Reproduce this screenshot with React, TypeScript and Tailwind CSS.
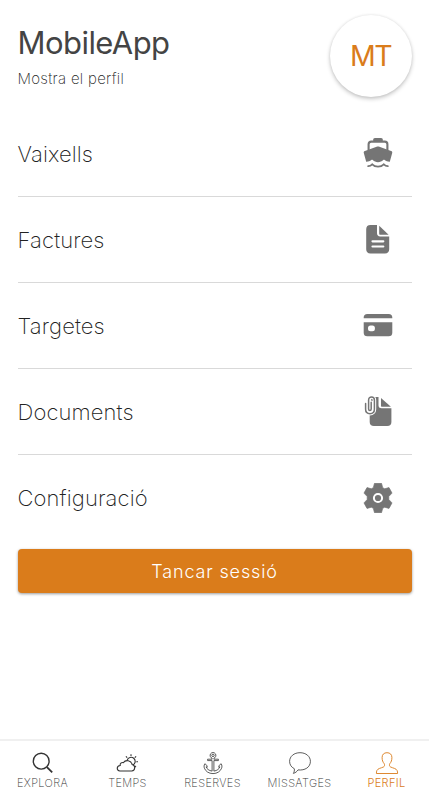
import React from 'react';
import clsx from 'clsx';

type IconProps = { className?: string };

const BoatIcon = ({ className }: IconProps) => (
  <svg viewBox="0 0 30 30" className={className} fill="currentColor">
    <path d="M10.200 3.500V1.800C10.200.7 10.800 0 12 0h6c1.200 0 1.800.7 1.800 1.800v1.700z" />
    <path d="M5.600 12V6.200c0-1.600 1-2.600 2.600-2.600h13.600c1.600 0 2.600 1 2.600 2.600V12" fill="none" stroke="currentColor" strokeWidth="2.100" />
    <path d="M13.600 8.700c1-.4 1.800-.4 2.800 0l11.700 4.300c1 .4 1.400 1.100 1.100 2.100l-2.400 8.700c-1.900.1-3.700-.4-5.100-1.700-.5-.4-1-.4-1.500 0-1.400 1.400-3.100 2.100-5.200 2.100s-3.800-.7-5.200-2.100c-.5-.4-1-.4-1.500 0-1.400 1.300-3.200 1.800-5.100 1.700L.8 15.100c-.3-1 .1-1.700 1.100-2.100z" />
    <path d="M5.200 28.200c1.600-.1 2.900-.8 4-1.900 1.500 1.500 3.500 2.300 5.800 2.300s4.300-.8 5.800-2.300c1.100 1.100 2.400 1.800 4 1.900" fill="none" stroke="currentColor" strokeWidth="1.800" strokeLinecap="round" />
  </svg>
);

const InvoiceIcon = ({ className }: IconProps) => (
  <svg viewBox="0 0 30 30" className={className}>
    <path d="M7.400 1H14v8.300c0 2 1.200 3.200 3.200 3.200h9v12.700c0 2.700-1.500 4.200-4.200 4.200H7.400c-2.700 0-4.200-1.500-4.200-4.200v-20C3.200 2.500 4.700 1 7.400 1z" fill="currentColor" />
    <path d="M16.200 1.700l9.400 9.100h-8.300c-.8 0-1.100-.3-1.100-1.100z" fill="currentColor" />
    <path d="M9.500 17.300h10.800M9.500 22.500h10.800" stroke="white" strokeWidth="2.200" strokeLinecap="round" />
  </svg>
);

const CardIcon = ({ className }: IconProps) => (
  <svg viewBox="0 0 30 30" className={className} fill="currentColor">
    <path d="M.7 8.300V7.600C.7 5.300 2 4 4.300 4h21.400c2.300 0 3.600 1.300 3.600 3.600v.7z" />
    <path d="M.7 12.200h28.600v10.500c0 2.300-1.300 3.600-3.600 3.600H4.300C2 26.300.7 25 .7 22.700zM7.500 15.500a2.500 2.500 0 0 0-2.500 2.500v.8a2.500 2.500 0 0 0 2.500 2.500h1.900a2.500 2.500 0 0 0 2.500-2.500V18a2.500 2.500 0 0 0-2.500-2.500z" fillRule="evenodd" />
  </svg>
);

const DocumentIcon = ({ className }: IconProps) => (
  <svg viewBox="0 0 30 30" className={className}>
    <path d="M9 1h6.500v8.200c0 2 1 3 3 3h9.900v13.700c0 2.700-1.400 4.100-4.100 4.100H10.900c-2.700 0-4.200-1.500-4.200-4.100V8z" fill="currentColor" />
    <path d="M18 2l9.900 8.700H19c-.7 0-1-.3-1-1z" fill="currentColor" />
    <path d="M2.600 7.500v5.800c0 2.900 1.900 4.400 4.400 4.400s4.400-1.600 4.400-4.400V4c0-1.900-1.200-3-2.900-3S5.600 2.100 5.600 4v9c0 1.900 2.600 1.900 2.600 0V6.300" fill="none" stroke="white" strokeWidth="3.600" strokeLinecap="round" />
    <path d="M2.600 7.500v5.800c0 2.900 1.900 4.400 4.400 4.400s4.400-1.600 4.400-4.400V4c0-1.900-1.200-3-2.900-3S5.600 2.100 5.600 4v9c0 1.900 2.600 1.900 2.600 0V6.300" fill="none" stroke="currentColor" strokeWidth="1.500" strokeLinecap="round" />
  </svg>
);

const GearIcon = ({ className }: IconProps) => (
  <svg viewBox="0 0 30 30" className={className}>
    <path
      d="M11.500.3h7l1.200 4.400 2 1.100 4.300-1.200 3 5.500-3.200 3.400v3l3.200 3.400-3 5.500-4.300-1.200-2 1.100-1.200 4.400h-7l-1.200-4.400-2-1.100L4 25.400l-3-5.500 3.200-3.400v-3L1 10.100l3-5.500 4.300 1.200 2-1.100z"
      fill="currentColor"
      stroke="currentColor"
      strokeWidth=".7"
      strokeLinejoin="round"
    />
    <circle cx="15" cy="15" r="4.100" fill="none" stroke="white" strokeWidth="2" />
  </svg>
);

const SearchIcon = ({ className }: IconProps) => (
  <svg viewBox="0 0 24 24" className={className} fill="none" stroke="currentColor">
    <circle cx="10.200" cy="10.200" r="7.900" strokeWidth="1.400" />
    <path d="M15.900 16.100l5.300 5.300" strokeWidth="1.800" />
  </svg>
);

const WeatherIcon = ({ className }: IconProps) => (
  <svg viewBox="0 0 24 24" className={className} fill="none" stroke="currentColor" strokeWidth="1.100">
    <path d="M3.900 20h11.800a3.300 3.300 0 0 0 .4-6.500 4.900 4.900 0 0 0-8.800-1.800 2.400 2.400 0 0 0-3.100 2.800c-4 .3-3.800 5.300-.3 5.500z" />
    <path d="M11.200 9a4.100 4.100 0 1 1 5.800 5M15 3.300v1.800M9.900 5.400l1.300 1.300M20.100 5.400l-1.300 1.300M22 10.700h-1.700M20 16.100l-1.200-1.200" />
  </svg>
);

const AnchorIcon = ({ className }: IconProps) => (
  <svg viewBox="0 0 24 24" className={className} fill="none" stroke="currentColor" strokeWidth=".8" strokeLinejoin="round">
    <path d="M11.100 7.200a2.900 2.900 0 1 1 1.800 0v1h4.500v1.400h-4.500v10.500c3.200-.4 5.400-2.300 6-4.200l-1.200.3c.2-1.500 1-2.900 2.500-3.400.9 1.500.9 3 .4 4.400-1.300 3.300-4.500 5.400-8.600 5.400s-7.300-2.100-8.600-5.400c-.5-1.400-.5-2.900.4-4.400 1.500.5 2.300 1.900 2.500 3.400l-1.200-.3c.6 1.900 2.800 3.800 6 4.200V9.600H6.600V8.200h4.500z" />
    <circle cx="12" cy="4.400" r="1.200" />
  </svg>
);

const MessageIcon = ({ className }: IconProps) => (
  <svg viewBox="0 0 24 24" className={className} fill="none" stroke="currentColor" strokeWidth=".8" strokeLinejoin="round">
    <path d="M12 1.700c-6 0-10.400 3.700-10.400 8.700 0 3.300 1.800 5.800 4.700 7.300.3 1.700-.1 3.300-.9 4.700 2.200-.7 3.500-1.800 4.600-3.500 7 .8 12.400-2.700 12.400-8.500 0-5-4.400-8.700-10.400-8.700z" />
  </svg>
);

const ProfileIcon = ({ className }: IconProps) => (
  <svg viewBox="0 0 24 24" className={className} fill="none" stroke="currentColor" strokeWidth=".9" strokeLinejoin="round">
    <path d="M12 1.700c-3.100 0-4.900 1.900-4.900 4.800 0 2.700.7 4.600 2.100 6.200.7 1.200.4 2.700-.8 3.300-2.500 1.200-5.600 1.400-6.500 3.500-.4.900-.5 2-.5 3h21.200c0-1-.1-2.100-.5-3-.9-2.100-4-2.300-6.500-3.500-1.200-.6-1.500-2.100-.8-3.300 1.400-1.600 2.100-3.500 2.100-6.200 0-2.900-1.800-4.800-4.900-4.800z" />
  </svg>
);

const menuItems = [
  { label: 'Vaixells', icon: BoatIcon },
  { label: 'Factures', icon: InvoiceIcon },
  { label: 'Targetes', icon: CardIcon },
  { label: 'Documents', icon: DocumentIcon },
  { label: 'Configuració', icon: GearIcon },
];

const tabs = [
  { label: 'EXPLORA', icon: SearchIcon },
  { label: 'TEMPS', icon: WeatherIcon },
  { label: 'RESERVES', icon: AnchorIcon },
  { label: 'MISSATGES', icon: MessageIcon },
  { label: 'PERFIL', icon: ProfileIcon, active: true },
];

export default function App() {
  return (
    <div className="flex h-screen flex-col bg-white font-['Inter',sans-serif] text-[#222222]">
      <main className="flex-1 px-[17.5px]">
        {/* Profile header */}
        <header className="flex h-[111px] items-start justify-between">
          <div className="pt-[24px]">
            <h1 className="text-[31px] leading-[38px] tracking-[-0.55px] text-[#444444]">MobileApp</h1>
            <p className="mt-[7px] text-[15px] leading-[20px] font-extralight tracking-[0.3px]">Mostra el perfil</p>
          </div>
          <div className="mt-[15px] flex size-[82px] items-center justify-center rounded-full bg-white text-[28.500px] tracking-[-1.5px] text-[#da7c1b] shadow-[0_2px_4px_rgba(0,0,0,0.22),0_0_3px_rgba(0,0,0,0.08)]">
            MT
          </div>
        </header>

        <ul>
          {menuItems.map(({ label, icon: Icon }) => (
            <li key={label} className="flex h-[86.1px] items-center justify-between border-b border-[#d9d9d9] pr-[19px] last:border-b-0">
              <span className="pt-px text-[22px] font-extralight tracking-[0.12px]">{label}</span>
              <Icon className="mb-[1.5px] size-[30px] text-[#757575]" />
            </li>
          ))}
        </ul>

        <button className="mt-[8px] flex h-[44px] w-full items-center justify-center rounded-[4px] bg-[#da7c1b] text-[18px] font-light tracking-[0.85px] text-white shadow-[0_1px_3px_rgba(0,0,0,0.4)]">
          Tancar sessió
        </button>
      </main>

      {/* Bottom tab bar */}
      <nav className="grid h-[61px] grid-cols-[85px_85px_85px_89px_85px] border-t-2 border-[#f0f0f0]">
        {tabs.map(({ label, icon: Icon, active }) => (
          <a key={label} className={clsx('flex flex-col items-center pt-[10px]', active ? 'text-[#da7c1b]' : 'text-[#333333]')}>
            <Icon className="size-[24px]" />
            <span className={clsx('text-[11px] leading-[16px] tracking-[0.35px]', active ? 'font-light' : 'font-extralight')}>{label}</span>
          </a>
        ))}
      </nav>
    </div>
  );
}
